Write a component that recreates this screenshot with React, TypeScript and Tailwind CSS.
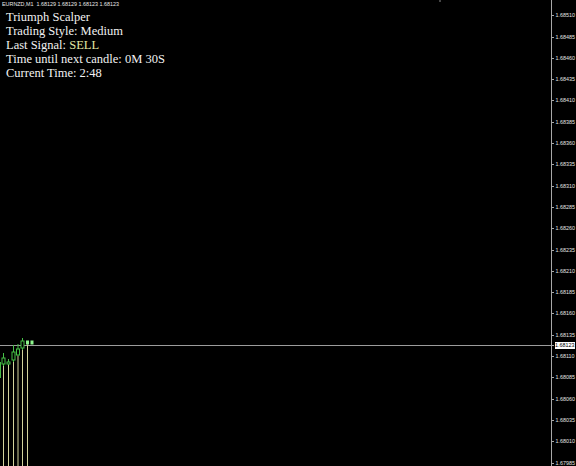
import React from "react";

const prices = Array.from({ length: 22 }, (_, i) => (1.6851 - i * 0.00025).toFixed(5));
const priceY = (i: number) => 15.7 + i * 21.3;

// candles: x, wick top, body top, body bottom, wick bottom
const candles = [
  { x: 3.5, hi: 353, top: 358, bot: 364, lo: 366 },
  { x: 8.5, hi: 359, top: 362, bot: 364, lo: 365 },
  { x: 13.5, hi: 345, top: 352, bot: 360, lo: 362 },
  { x: 18, hi: 344, top: 349, bot: 355, lo: 356 },
  { x: 22.5, hi: 338, top: 341, bot: 348, lo: 350 },
];

const App = () => {
  return (
    <div className="w-[576px] h-[466px] bg-black flex overflow-hidden">
      <div className="relative flex-1 flex flex-col">
        <svg className="absolute inset-0" width="551" height="466">
          <line x1="0" y1="345.5" x2="551" y2="345.5" stroke="#9c9c9c" strokeWidth="1" />
          <line x1="440" y1="0" x2="440" y2="2" stroke="#8a8a8a" strokeWidth="1" />
          <line x1="0.5" y1="362" x2="0.5" y2="378" stroke="#42b842" strokeWidth="1" />
          {candles.map((c, i) => (
            <g key={i}>
              <line x1={c.x} y1={c.lo} x2={c.x} y2="466" stroke="#d2d29c" strokeWidth="1" />
              <line x1={c.x} y1={c.hi} x2={c.x} y2={c.lo} stroke="#46c046" strokeWidth="1" />
              <rect x={c.x - 1.5} y={c.top} width="3" height={c.bot - c.top} fill="black" stroke="#46c046" strokeWidth="1" />
            </g>
          ))}
          <line x1="27.5" y1="344.5" x2="27.5" y2="466" stroke="#d2d29c" strokeWidth="1" />
          <rect x="26" y="340.5" width="3" height="4" fill="#8cf58c" />
          <rect x="30.5" y="340.5" width="3" height="4" fill="#8cf58c" />
        </svg>

        <div className="relative pl-[2px] text-[5.4px] leading-[8px] text-[#e8e8e8] whitespace-pre font-['Liberation_Sans',Arial,sans-serif]">
          EURNZD,M1  1.68129 1.68129 1.68123 1.68123
        </div>

        <div className="relative mt-[1.5px] pl-[6px] flex flex-col text-[12.5px] leading-[14px] text-[#f2f2f2] font-['Liberation_Serif','Times_New_Roman',serif]">
          <span>Triumph Scalper</span>
          <span>Trading Style: Medium</span>
          <span>
            Last Signal: <span className="text-[#e2e9a4]">SELL</span>
          </span>
          <span>Time until next candle: 0M 30S</span>
          <span>Current Time: 2:48</span>
        </div>
      </div>

      <div className="relative w-[25px] border-l border-[#a8a8a8] font-['Liberation_Sans',Arial,sans-serif] text-[5.4px] leading-[7px] text-[#e4e4e4] whitespace-nowrap">
        {prices.map((p, i) => (
          <div key={p} className="absolute left-0 flex items-center h-[7px]" style={{ top: priceY(i) - 3.5 }}>
            <div className="w-[2px] h-px bg-[#a8a8a8]" />
            <span className="ml-[1.5px]">{p}</span>
          </div>
        ))}
        <div className="absolute left-0 top-[342px] flex items-center h-[7px]">
          <div className="w-[2px] h-px bg-[#a8a8a8]" />
          <span className="ml-[0.5px] px-[0.5px] bg-white text-black">1.68123</span>
        </div>
      </div>
    </div>
  );
};

export default App;
